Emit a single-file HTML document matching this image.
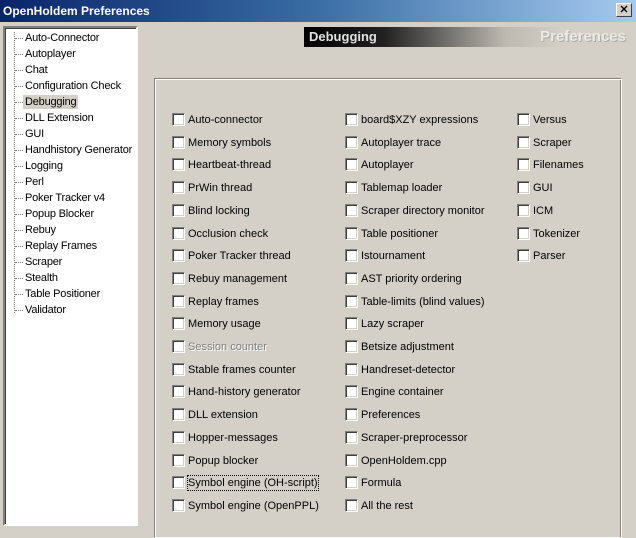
<!DOCTYPE html>
<html><head><style>
*{margin:0;padding:0;box-sizing:border-box}
body{width:636px;height:519px;overflow:hidden;background:#d4d0c8;font-family:Tahoma,"Liberation Sans",sans-serif;font-size:11px;color:#000;position:relative}
.title{position:absolute;left:0;top:0;width:636px;height:22px;background:linear-gradient(90deg,#0a246a,#3a6ea5 50%,#a6caf0);color:#fff;font-weight:bold;font-size:12px;padding:4px 0 0 3px}
.close{position:absolute;right:4px;top:3px;width:16px;height:14px;background:#d4d0c8;border:1px solid;border-color:#fff #404040 #404040 #fff;font-size:11px;font-weight:bold;color:#000;text-align:center;line-height:12px}
.tree{position:absolute;left:3px;top:26px;width:135px;height:500px;background:#fff;border:2px solid;border-color:#808080 #fff #fff #808080;box-shadow:inset 1px 1px #404040}
.ti{position:absolute;left:18px;height:14px;line-height:14px;padding:0 2px;white-space:nowrap;letter-spacing:-0.2px}
.ti.sel{background:#d4d0c8}
.dl{position:absolute;left:9px;border-left:1px dotted #808080;top:4px;width:1px;height:281px}
.dh{position:absolute;left:10px;width:8px;border-top:1px dotted #808080}
.hdr{position:absolute;left:304px;top:27px;width:324px;height:20px;background:linear-gradient(90deg,#000 0%,#222 25%,#bdb9b1 62%,#d4d0c8 80%);}
.hdr .a{position:absolute;left:5px;top:2px;color:#e0e0e0;font-weight:bold;font-size:13px;font-family:"Liberation Sans",sans-serif}
.hdr .b{position:absolute;right:2px;top:1px;font-weight:bold;font-size:15px;font-family:"Liberation Sans",sans-serif;text-shadow:1px 1px #aaa;color:#eeeae4}
.grp{position:absolute;left:154px;top:78px;width:468px;height:460px;border:1px solid;border-color:#808080 #fff #fff #808080;box-shadow:1px 1px 0 #fff inset, -1px 0 0 #808080 inset}
.cb{position:absolute;width:13px;height:13px;background:#fff;border:1px solid;border-color:#808080 #fff #fff #808080;box-shadow:inset 1px 1px #404040,inset -1px -1px #d4d0c8}
.lb{position:absolute;white-space:nowrap;line-height:14px}
.dis{color:#808080;text-shadow:1px 1px #fff}
.foc{outline:1px dotted #000}
</style></head><body>
<div class="title">OpenHoldem Preferences<div class="close">✕</div></div>
<div class="tree">
<div class="dl"></div>
<div id="t"></div>
</div>
<div class="hdr"><span class="a">Debugging</span><span class="b">Preferences</span></div>
<div class="grp"></div>
<div id="c"></div>
<script>
var items=["Auto-Connector","Autoplayer","Chat","Configuration Check","Debugging","DLL Extension","GUI","Handhistory Generator","Logging","Perl","Poker Tracker v4","Popup Blocker","Rebuy","Replay Frames","Scraper","Stealth","Table Positioner","Validator"];
var h="";items.forEach(function(s,i){var y=3+i*16;h+='<div class="dh" style="top:'+(y+7)+'px"></div><div class="ti'+(i==4?' sel':'')+'" style="top:'+y+'px">'+s+'</div>';});
document.getElementById("t").innerHTML=h;
var cols=[[172,["Auto-connector","Memory symbols","Heartbeat-thread","PrWin thread","Blind locking","Occlusion check","Poker Tracker thread","Rebuy management","Replay frames","Memory usage","Session counter","Stable frames counter","Hand-history generator","DLL extension","Hopper-messages","Popup blocker","Symbol engine (OH-script)","Symbol engine (OpenPPL)"]],
[345,["board$XZY expressions","Autoplayer trace","Autoplayer","Tablemap loader","Scraper directory monitor","Table positioner","Istournament","AST priority ordering","Table-limits (blind values)","Lazy scraper","Betsize adjustment","Handreset-detector","Engine container","Preferences","Scraper-preprocessor","OpenHoldem.cpp","Formula","All the rest"]],
[517,["Versus","Scraper","Filenames","GUI","ICM","Tokenizer","Parser"]]];
var o="";cols.forEach(function(c){c[1].forEach(function(s,i){var y=Math.round(113+i*22.7);var cls="lb";if(s=="Session counter")cls+=" dis";if(s=="Symbol engine (OH-script)")cls+=" foc";
o+='<div class="cb" style="left:'+c[0]+'px;top:'+y+'px"></div><div class="'+cls+'" style="left:'+(c[0]+16)+'px;top:'+y+'px">'+s+'</div>';});});
document.getElementById("c").innerHTML=o;
</script>
</body></html>
